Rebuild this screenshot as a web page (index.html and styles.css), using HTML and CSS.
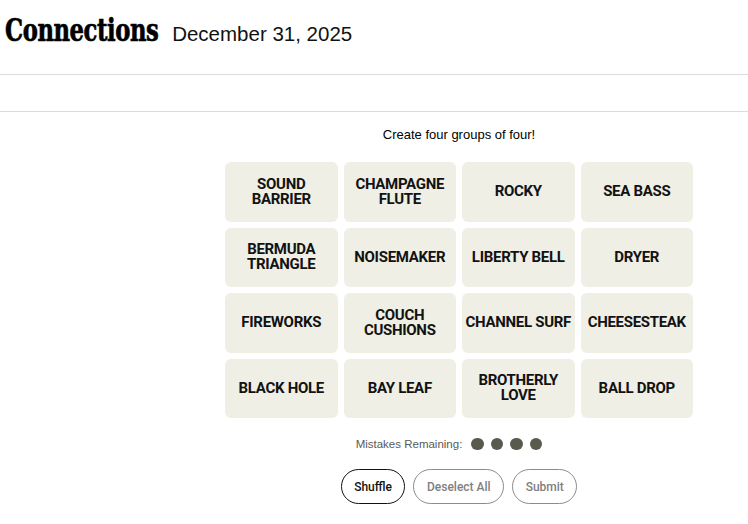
FILE: index.html
```html
<!DOCTYPE html>
<html lang="en">
<head>
<meta charset="utf-8">
<title>Connections</title>
<link rel="stylesheet" href="styles.css">
</head>
<body>
<header class="masthead">
  <h1 class="title">Connections</h1>
  <span class="date">December 31, 2025</span>
</header>
<div class="subbar"></div>
<main class="game">
  <p class="instructions">Create four groups of four!</p>
  <div class="board">
    <div class="tile">SOUND BARRIER</div>
    <div class="tile">CHAMPAGNE FLUTE</div>
    <div class="tile">ROCKY</div>
    <div class="tile">SEA BASS</div>
    <div class="tile">BERMUDA TRIANGLE</div>
    <div class="tile">NOISEMAKER</div>
    <div class="tile">LIBERTY BELL</div>
    <div class="tile">DRYER</div>
    <div class="tile">FIREWORKS</div>
    <div class="tile">COUCH CUSHIONS</div>
    <div class="tile">CHANNEL SURF</div>
    <div class="tile">CHEESESTEAK</div>
    <div class="tile">BLACK HOLE</div>
    <div class="tile">BAY LEAF</div>
    <div class="tile">BROTHERLY LOVE</div>
    <div class="tile">BALL DROP</div>
  </div>
  <div class="mistakes">
    <span class="mistakes-label">Mistakes Remaining:</span>
    <span class="dots">
      <span class="dot"></span><span class="dot"></span><span class="dot"></span><span class="dot"></span>
    </span>
  </div>
  <div class="controls">
    <button class="btn btn-active">Shuffle</button>
    <button class="btn btn-disabled">Deselect All</button>
    <button class="btn btn-disabled">Submit</button>
  </div>
</main>
</body>
</html>
```

FILE: styles.css
```css
* { box-sizing: border-box; }
html, body { margin: 0; padding: 0; background: #fff; }
body { font-family: "Liberation Sans", Arial, sans-serif; color: #000; }

.masthead {
  height: 75px;
  border-bottom: 1px solid #dcdcdc;
  display: flex;
  align-items: baseline;
  padding: 11px 6px 0 5px;
}
.title {
  margin: 0 -62px 0 0;
  display: inline-block;
  font-family: "DejaVu Serif", serif;
  font-weight: 700;
  font-size: 32px;
  line-height: 38px;
  letter-spacing: -0.6px;
  transform: scaleX(0.71);
  transform-origin: left center;
  -webkit-text-stroke: 0.7px #000;
}
.date {
  margin-left: 13px;
  font-family: "Liberation Sans", Arial, sans-serif;
  font-size: 20.5px;
  font-weight: 400;
  color: #121212;
}
.subbar {
  height: 37px;
  border-bottom: 1px solid #dcdcdc;
}

.game {
  width: 468px;
  margin-left: 225px;
  display: flex;
  flex-direction: column;
  align-items: center;
}
.instructions {
  margin: 13px 0 0 0;
  font-size: 13px;
  line-height: 20px;
  color: #000;
}
.board {
  margin-top: 17px;
  width: 468px;
  display: grid;
  grid-template-columns: repeat(4, minmax(0, 1fr));
  grid-auto-rows: 59.5px;
  gap: 6px;
}
.tile {
  background: #efefe6;
  border-radius: 6px;
  display: flex;
  align-items: center;
  justify-content: center;
  text-align: center;
  font-family: Roboto, "Liberation Sans", sans-serif;
  font-weight: 700;
  font-size: 15px;
  line-height: 15px;
  letter-spacing: -0.3px;
  padding: 0 2px;
  color: #121212;
}
.mistakes {
  margin-top: 16px;
  height: 20px;
  display: flex;
  align-items: center;
  gap: 9px;
  padding-right: 20px;
}
.mistakes-label {
  font-size: 11.5px;
  color: #5a5a5a;
}
.dots { display: flex; gap: 7px; }
.dot {
  width: 12.5px;
  height: 12.5px;
  border-radius: 50%;
  background: #5a594e;
}
.controls {
  margin-top: 15px;
  display: flex;
  gap: 8px;
}
.btn {
  height: 35px;
  border-radius: 18px;
  background: #fff;
  font-family: Roboto, "Liberation Sans", sans-serif;
  font-size: 12px;
  font-weight: 500;
  padding: 0 12.5px;
}
.btn-active { border: 1px solid #121212; color: #121212; }
.btn-disabled { border: 1px solid #8c8c8c; color: #7f7f7f; }
```
